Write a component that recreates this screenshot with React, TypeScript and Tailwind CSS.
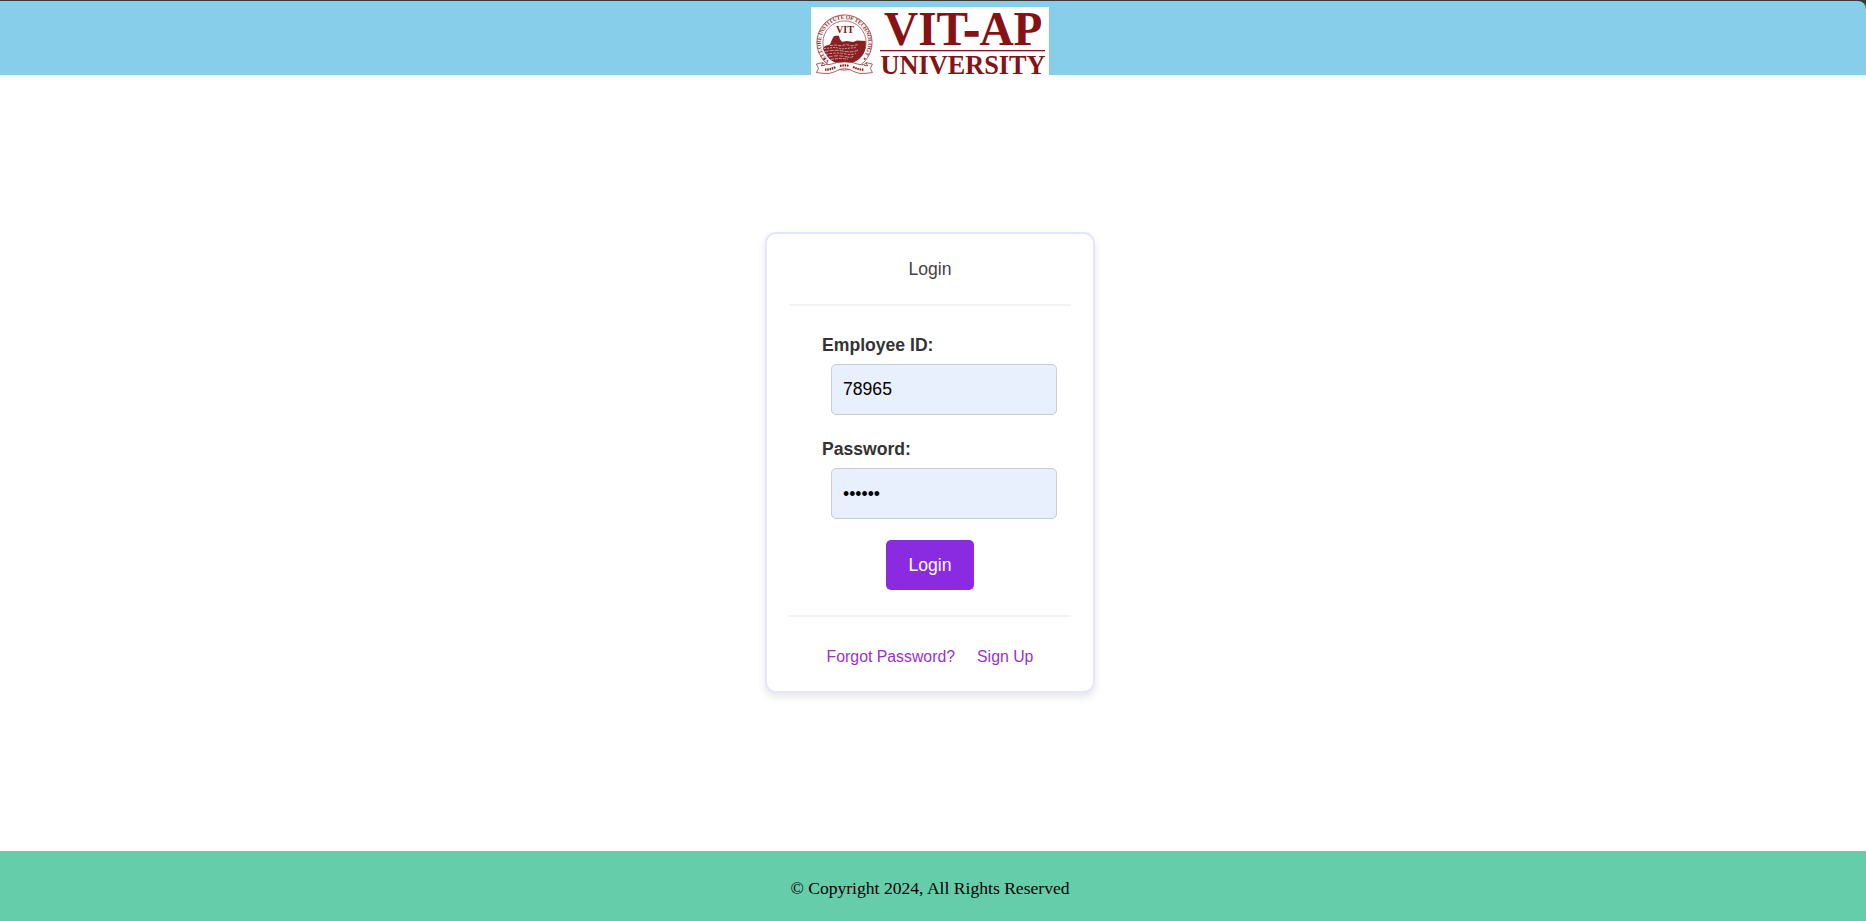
import type { ReactNode } from "react";

function Seal() {
  return (
    <g>
      <defs>
        <path id="seal-ring" d="M 18.8 54.2 A 23.6 23.6 0 1 1 48.2 54.2" />
      </defs>
      <circle cx="33.5" cy="35.5" r="27.6" fill="#fff" stroke="#9c3a3c" strokeWidth="0.8" />
      <circle cx="33.5" cy="35.5" r="21.6" fill="none" stroke="#9c3a3c" strokeWidth="0.7" />
      <text fontFamily="Liberation Serif, serif" fontWeight="700" fontSize="5.8" fill="#963032">
        <textPath href="#seal-ring" textLength="108">VELLORE INSTITUTE OF TECHNOLOGY</textPath>
      </text>
      <path
        d="M12.4 41 L14 39 L19 37.4 L20.6 33.4 L22.6 29.4 L24.4 28.8 L28 28.8 L28.8 32 L31 34.8 L36 34 L42 35 L46 33.6 L54.6 34 C55.6 41 53 48 48.6 51.4 C44 55.4 38 57 33 57 C25 57 18.5 53.6 15.4 48 C13 44 12 43 12.4 41 Z"
        fill="#8b2022"
      />
      <g stroke="#fff" fill="none" strokeWidth="0.8" opacity="0.7">
        <path d="M19 38.6 L24 38 L30 38.8 L35 37.6 L41 38.8 L47 37.6" strokeDasharray="3 1.2" />
        <path d="M13 41.6 L24 40.4 L31 41.8 L45 40.6" strokeDasharray="2 1" />
        <path d="M13.6 44.6 Q24 42.4 33 44.2 T47 43" strokeDasharray="4 1" />
        <path d="M15 47.4 Q25 45 34 46.8 T45 46" strokeDasharray="2.4 1.2" />
        <path d="M17.6 50 Q26 47.8 34 49.6 T42 49" strokeDasharray="4 1.4" />
        <path d="M20 52.4 Q28 50.8 37 52.2" strokeDasharray="3 1" />
      </g>
      <text x="33.9" y="25.6" textAnchor="middle" fontFamily="Liberation Serif, serif" fontWeight="700" fontSize="10" textLength="18" fill="#851214">
        VIT
      </text>
      <path
        d="M5.4 57 L12 55.6 Q13 58.4 19 57.4 Q26 54.8 33.5 55 Q41 54.8 48 57.4 Q54 58.4 55 55.6 L61.4 57 L59.4 61.4 L61.4 65.6 L54 66.4 Q49 67.2 44 65 Q38 61.6 33.5 61.6 Q29 61.6 23 65 Q18 67.2 13 66.4 L5.4 65.6 L7.6 61.4 Z"
        fill="#fff"
        stroke="#9c3a3c"
        strokeWidth="0.8"
      />
      <path d="M14 62.6 Q19 62.8 25 60 M29 58.8 Q33.5 58 38 58.8 M42 60 Q48 62.8 53 62.6" stroke="#8b2022" strokeWidth="2.2" strokeDasharray="1.6 0.7" fill="none" />
      <path d="M12 55.6 L10.4 59 L14 58.2 M55 55.6 L56.6 59 L53 58.2" stroke="#8b2022" strokeWidth="0.8" fill="none" />
      <circle cx="13.4" cy="51.8" r="1" fill="#8b2022" />
      <circle cx="53.6" cy="51.8" r="1" fill="#8b2022" />
    </g>
  );
}

function Logo() {
  return (
    <svg viewBox="0 0 238 68" className="block h-[68px] w-[238px] bg-white" role="img">
      <Seal />
      <g fill="#851214" fontFamily="Liberation Serif, serif" fontWeight="700">
        <text x="73" y="38.3" fontSize="47.6" textLength="158.5" lengthAdjust="spacingAndGlyphs">
          VIT<tspan stroke="#851214" strokeWidth="1.6">-</tspan>AP
        </text>
        <rect x="69" y="43" width="165" height="1.3" />
        <text x="69.5" y="66.8" fontSize="26.8" textLength="165" lengthAdjust="spacingAndGlyphs">UNIVERSITY</text>
      </g>
    </svg>
  );
}

function Field({ label, children }: { label: string; children: ReactNode }) {
  return (
    <label className="block h-[104px] pl-[33px]">
      <span className="block h-[31px] pt-[2px] text-[17.6px] leading-5 font-bold text-[#333333]">{label}</span>
      {children}
    </label>
  );
}

const inputClass =
  "ml-[9px] block h-[51px] w-[226px] rounded-[5px] border border-[#cccccc] bg-[#e8f0fe] px-[11px] text-[17.6px] text-black outline-none";

export default function App() {
  return (
    <div className="flex h-[921px] w-full flex-col overflow-hidden bg-white">
      <div className="h-[75px] shrink-0 bg-[#3a3a3c]">
        <header className="flex h-full flex-col border-t border-[#3a3a3c]">
          <div className="flex flex-1 justify-center rounded-tr-[8px] bg-[#87ceeb] pt-1.5 pr-[6px]">
            <Logo />
          </div>
        </header>
      </div>

      <main className="flex flex-1 justify-center pt-[157px] pr-[6px] font-['Liberation_Sans',Arial,sans-serif]">
        <form
          className="flex h-[461px] w-[330px] flex-col rounded-[11px] border-2 border-[#e6e6fa] bg-white px-[22px] shadow-[0_4px_9px_rgba(0,0,0,0.1)]"
          onSubmit={(e) => e.preventDefault()}
        >
          <h1 className="h-[72px] border-b-2 border-[#f2f2f2] pt-[25px] text-center text-[17.6px] leading-5 text-[#444444]">
            Login
          </h1>
          <div className="flex h-[311px] flex-col border-b-2 border-[#f2f2f2] pt-[27px]">
            <Field label="Employee ID:">
              <input type="text" defaultValue="78965" className={inputClass} />
            </Field>
            <Field label="Password:">
              <input type="password" defaultValue="123456" className={`${inputClass} pt-px`} />
            </Field>
            <button
              type="submit"
              className="-mt-px h-[50px] w-[88px] self-center rounded-[5px] bg-[#8a2be2] text-[17.6px] text-white"
            >
              Login
            </button>
          </div>
          <nav className="flex justify-center gap-[22px] pt-[30px] text-[15.84px] leading-5 text-[#9932cc]">
            <a href="#forgot">Forgot Password?</a>
            <a href="#signup">Sign Up</a>
          </nav>
        </form>
      </main>

      <footer className="flex h-[70px] shrink-0 items-center justify-center bg-[#66cdaa] pt-1 pr-[6px] font-['Liberation_Serif','Times_New_Roman',serif] text-[17.6px] text-black">
        © Copyright 2024, All Rights Reserved
      </footer>
    </div>
  );
}
